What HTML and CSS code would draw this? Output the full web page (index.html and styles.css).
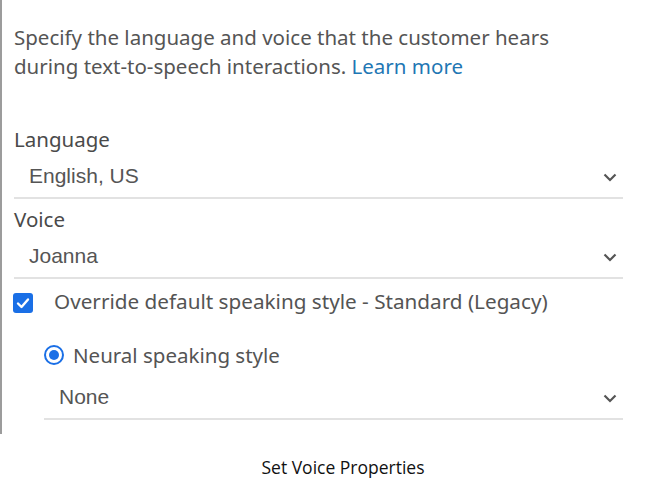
FILE: index.html
```html
<!DOCTYPE html>
<html>
<head>
<meta charset="utf-8">
<link rel="stylesheet" href="styles.css">
</head>
<body>
<div class="panel">
  <p class="desc">Specify the language and voice that the customer hears<br>during text-to-speech interactions. <a class="link" href="#">Learn more</a></p>
  <div class="field">
    <div class="label">Language</div>
    <div class="select"><span class="value">English, US</span><svg class="chev" width="14" height="9" viewBox="0 0 14 9"><path d="M1.5 1.5 L7 7 L12.5 1.5" fill="none" stroke="#555" stroke-width="2.2"/></svg></div>
  </div>
  <div class="field">
    <div class="label">Voice</div>
    <div class="select"><span class="value">Joanna</span><svg class="chev" width="14" height="9" viewBox="0 0 14 9"><path d="M1.5 1.5 L7 7 L12.5 1.5" fill="none" stroke="#555" stroke-width="2.2"/></svg></div>
  </div>
  <div class="check-row">
    <span class="checkbox"><svg width="20" height="20" viewBox="0 0 20 20"><path d="M5 10.5 L8.5 14 L15 6.5" fill="none" stroke="#fff" stroke-width="2.4" stroke-linecap="round" stroke-linejoin="round"/></svg></span>
    <span class="check-text">Override default speaking style - Standard (Legacy)</span>
  </div>
  <div class="sub">
    <div class="radio-row">
      <span class="radio"><span class="dot"></span></span>
      <span class="radio-text">Neural speaking style</span>
    </div>
    <div class="select sub-select"><span class="value">None</span><svg class="chev" width="14" height="9" viewBox="0 0 14 9"><path d="M1.5 1.5 L7 7 L12.5 1.5" fill="none" stroke="#555" stroke-width="2.2"/></svg></div>
  </div>
</div>
<div class="caption">Set Voice Properties</div>
</body>
</html>
```
FILE: styles.css
```css
html, body {
  margin: 0;
  padding: 0;
  background: #fff;
}
body {
  width: 656px;
  height: 482px;
  overflow: hidden;
}
.panel {
  box-sizing: border-box;
  height: 434px;
  border-left: 2px solid #9c9c9c;
  padding: 23px 33px 0 12px;
  font-family: "Noto Sans", sans-serif;
  color: #545454;
}
.desc {
  margin: 0;
  font-size: 20.5px;
  line-height: 29px;
  color: #555;
  white-space: nowrap;
}
.link {
  color: #1f77b4;
  text-decoration: none;
}
.field {
  display: flex;
  flex-direction: column;
}
.desc + .field {
  margin-top: 45px;
}
.field + .field {
  margin-top: 7px;
}
.label {
  font-size: 20.5px;
  line-height: 26px;
  color: #4a4a4a;
}
.select {
  display: flex;
  align-items: center;
  justify-content: space-between;
  height: 47px;
  padding: 0 6px 0 15px;
  border-bottom: 2px solid #e2e2e2;
  box-sizing: border-box;
}
.value {
  font-family: "Liberation Sans", Arial, sans-serif;
  font-size: 21px;
  color: #555;
  padding-top: 3px;
}
.chev {
  display: block;
  margin-top: 6px;
}
.check-row {
  display: flex;
  align-items: center;
  gap: 21px;
  margin-top: 9px;
  margin-left: -1px;
}
.checkbox {
  width: 20px;
  height: 20px;
  border-radius: 3px;
  background: #1a6fe6;
  display: block;
}
.checkbox svg {
  display: block;
}
.check-text {
  font-size: 20.7px;
  line-height: 26px;
  padding-bottom: 4px;
}
.sub {
  padding-left: 30px;
  margin-top: 24px;
}
.radio-row {
  display: flex;
  align-items: center;
  gap: 9px;
}
.radio {
  box-sizing: border-box;
  width: 20px;
  height: 20px;
  border-radius: 50%;
  border: 2px solid #1a6fe6;
  display: flex;
  align-items: center;
  justify-content: center;
}
.dot {
  width: 10px;
  height: 10px;
  border-radius: 50%;
  background: #1a6fe6;
}
.radio-text {
  font-size: 20.5px;
  line-height: 26px;
}
.sub-select {
  height: 46px;
  margin-top: 6px;
  padding-bottom: 2px;
}
.caption {
  font-family: "Open Sans", "Liberation Sans", sans-serif;
  font-size: 17.5px;
  color: #111;
  text-align: center;
  padding: 21px 0 0 30px;
}
```
